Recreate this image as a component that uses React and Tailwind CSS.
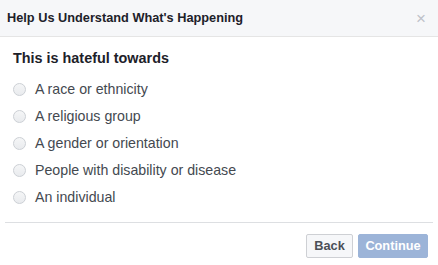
import React, { useState } from "react";

const options = [
  "A race or ethnicity",
  "A religious group",
  "A gender or orientation",
  "People with disability or disease",
  "An individual",
];

const Radio = ({ checked }) => (
  <span
    className={`inline-block w-[13px] h-[13px] rounded-full border ${
      checked ? "border-[#4267b2]" : "border-[#ccd0d5]"
    } bg-gradient-to-b from-[#f5f6f7] to-[#e9ebee]`}
  />
);

const App = () => {
  const [selected, setSelected] = useState(null);

  return (
    <div
      className="w-[438px] h-[265px] bg-white text-[#1d2129] overflow-hidden"
      style={{ fontFamily: '"Liberation Sans", Arial, sans-serif' }}
    >
      {/* header */}
      <div className="flex items-center justify-between h-[37px] px-[7px] bg-[#f6f7f9] border-b border-[#e5e5e5]">
        <span className="text-[12.75px] font-bold">Help Us Understand What's Happening</span>
        <span className="text-[#bec2c9] text-[17px] leading-none mr-[5px]">×</span>
      </div>

      <div className="pl-[13px] pt-[13px]">
        <div className="text-[14.4px] font-bold leading-[17px]">This is hateful towards</div>
        <div className="mt-[9px] flex flex-col">
          {options.map((o, i) => (
            <label
              key={o}
              className="flex items-center h-[27px] cursor-pointer"
              onClick={() => setSelected(i)}
            >
              <Radio checked={selected === i} />
              <span className="ml-[9px] text-[14.2px] text-[#444950]">{o}</span>
            </label>
          ))}
        </div>
      </div>

      {/* footer */}
      <div className="mx-[5px] mt-[11px] border-t border-[#dddfe2]" />
      <div className="flex justify-end gap-[5px] pr-[10px] pt-[11px]">
        <button className="h-[24px] w-[47px] text-[12.75px] font-bold text-[#4b4f56] bg-[#f6f7f9] border border-[#ced0d4] rounded-[2px]">
          Back
        </button>
        <button className="h-[24px] w-[70px] text-[12.75px] font-bold text-white bg-[#9cb4d8] border border-[#9cb4d8] rounded-[2px]">
          Continue
        </button>
      </div>
    </div>
  );
};

export default App;
